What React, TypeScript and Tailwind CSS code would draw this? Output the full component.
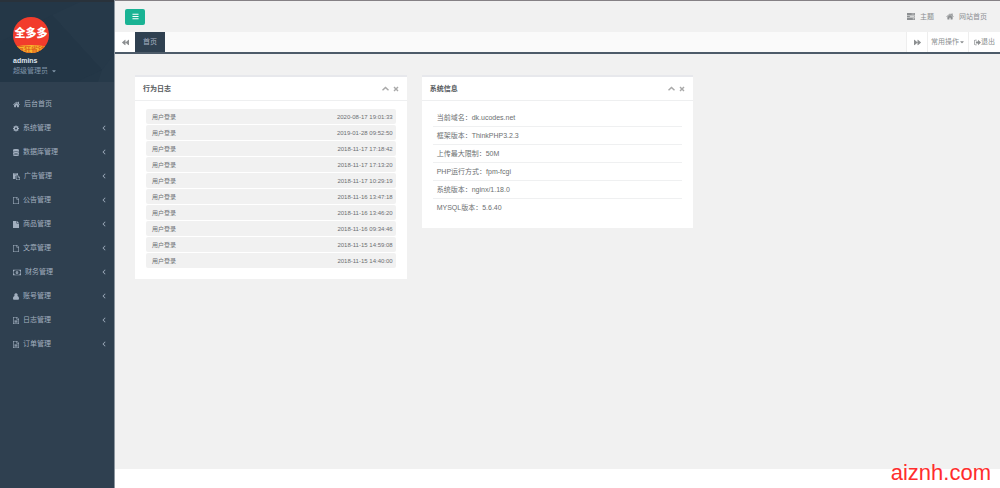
import type { ReactNode } from 'react';
import { FaBackward, FaBars, FaCaretDown, FaForward } from 'react-icons/fa';

type IconProps = { className?: string };

function Glyph({ box, className, children }: IconProps & { box: string; children: ReactNode }) {
  return (
    <svg viewBox={box} className={className} fill="currentColor" fillRule="evenodd" aria-hidden="true">
      {children}
    </svg>
  );
}

function HomeIcon({ className }: IconProps) {
  return (
    <Glyph box="0 128 1664 1536" className={className}>
      <path d="M1408 992v480q0 26-19 45t-45 19h-384v-384h-256v384h-384q-26 0-45-19t-19-45v-480q0-1 .5-3t.5-3l575-474 575 474q1 2 1 6zm223-69l-62 74q-8 9-21 11h-3q-13 0-21-7l-692-577-692 577q-12 8-24 7-13-2-21-11l-62-74q-8-10-7-23.5t11-21.5l719-599q32-26 76-26t76 26l244 204v-195q0-14 9-23t23-9h192q14 0 23 9t9 23v408l219 182q10 8 11 21.5t-7 23.5z" />
    </Glyph>
  );
}

function CogIcon({ className }: IconProps) {
  return (
    <Glyph box="0 0 12 12" className={className}>
      <path d="M5 0h2l.3 1.6 1 .4L9.700 1.100 10.900 2.300 10 3.700l.4 1L12 5v2l-1.600.3-.4 1 .9 1.400-1.200 1.200L8.300 10l-1 .4L7 12H5l-.3-1.600-1-.4-1.400.9L1.100 9.700 2 8.300l-.4-1L0 7V5l1.600-.3.4-1L1.100 2.300 2.300 1.100 3.700 2l1-.4zM6 4a2 2 0 1 0 0 4a2 2 0 0 0 0-4z" />
    </Glyph>
  );
}

function DatabaseIcon({ className }: IconProps) {
  return (
    <Glyph box="0 0 12 14" className={className}>
      <path d="M0 2C0 .7 2.500 0 6 0s6 .7 6 2v1c0 1.300-2.500 2-6 2s-6-.7-6-2zM0 4.500C1.300 5.600 3.500 6 6 6s4.700-.4 6-1.500V6c0 1.300-2.500 2-6 2s-6-.7-6-2zM0 7.500C1.300 8.600 3.500 9 6 9s4.700-.4 6-1.500V9c0 1.300-2.500 2-6 2s-6-.7-6-2zM0 10.500C1.300 11.600 3.500 12 6 12s4.700-.4 6-1.500V12c0 1.300-2.500 2-6 2s-6-.7-6-2z" />
    </Glyph>
  );
}

function PasteIcon({ className }: IconProps) {
  return (
    <Glyph box="0 0 14 14" className={className}>
      <path d="M0 .7h10V4H7L5 6v6H0zM2.500 1.500v1h5v-1zM6 5h4.500L14 8.500V14H6zM7 6v7h6V9.500H9.500V6zM10.500 6.500v2h2z" />
    </Glyph>
  );
}

function FileOutlineIcon({ className }: IconProps) {
  return (
    <Glyph box="0 0 12 14" className={className}>
      <path d="M0 0h8l4 4v10H0zM1.200 1.200v11.600h9.600V5H7V1.200zM8.200 1.500v2.300h2.300z" />
    </Glyph>
  );
}

function FileIcon({ className }: IconProps) {
  return (
    <Glyph box="0 0 12 14" className={className}>
      <path d="M0 0h7v5h5v9H0zM8 0l4 4H8z" />
    </Glyph>
  );
}

function FileTextIcon({ className }: IconProps) {
  return (
    <Glyph box="0 0 12 14" className={className}>
      <path d="M0 0h8l4 4v10H0zM1.200 1.200v11.600h9.600V5H7V1.200zM8.200 1.500v2.300h2.300zM3 6h6v1.200H3zM3 8.200h6v1.200H3zM3 10.400h6v1.200H3z" />
    </Glyph>
  );
}

function MoneyIcon({ className }: IconProps) {
  return (
    <Glyph box="0 0 15 12" className={className}>
      <path d="M0 1h15v10H0zM3 2A2 2 0 0 1 1 4v4a2 2 0 0 1 2 2h9a2 2 0 0 1 2-2V4a2 2 0 0 1-2-2zM7.500 3a2.500 3 0 1 1 0 6a2.500 3 0 1 1 0-6zM7 4.300v3.500h1V4.300z" />
    </Glyph>
  );
}

function UserIcon({ className }: IconProps) {
  return (
    <Glyph box="0 0 12 13" className={className}>
      <path d="M6 0a3.300 3.300 0 0 1 2.600 5.500C11 6 12 8 12 10.500 12 12 11 13 9.500 13h-7C1 13 0 12 0 10.500 0 8 1 6 3.400 5.500A3.300 3.300 0 0 1 6 0z" />
    </Glyph>
  );
}

function TasksIcon({ className }: IconProps) {
  return (
    <Glyph box="0 0 14 12" className={className}>
      <path d="M0 0h14v3.400H0zM8 1v1.200h5V1zM0 4.300h14v3.400H0zM5 5.300v1.200h8V5.300zM0 8.600h14V12H0zM10 9.600v1.200h3V9.600z" />
    </Glyph>
  );
}

function SignOutIcon({ className }: IconProps) {
  return (
    <Glyph box="0 0 13 12" className={className}>
      <path d="M5 1v1.300H2.500Q1.300 2.300 1.300 3.500v5q0 1.200 1.200 1.200H5V11H2.500Q0 11 0 8.500v-5Q0 1 2.500 1zM7.500 1L13 6l-5.500 5V8H3.500V4h4z" />
    </Glyph>
  );
}

function ChevronUpIcon({ className }: IconProps) {
  return (
    <Glyph box="0 0 14 14" className={className}>
      <path d="M7 3l7 6.500-2 2L7 7l-5 4.500-2-2z" />
    </Glyph>
  );
}

function CloseIcon({ className }: IconProps) {
  return (
    <Glyph box="0 0 12 12" className={className}>
      <path d="M3 1l3 3 3-3 2 2-3 3 3 3-2 2-3-3-3 3-2-2 3-3-3-3z" />
    </Glyph>
  );
}

function AngleLeftIcon({ className }: IconProps) {
  return (
    <Glyph box="0 0 8 12" className={className}>
      <path d="M6 1l1 1-3.800 4L7 10l-1 1-5-5z" />
    </Glyph>
  );
}

const menu: { label: string; icon: (props: IconProps) => ReactNode; size: string; leaf?: boolean }[] = [
  { label: '后台首页', icon: HomeIcon, size: 'w-[7px]', leaf: true },
  { label: '系统管理', icon: CogIcon, size: 'w-[6px]' },
  { label: '数据库管理', icon: DatabaseIcon, size: 'w-[6px]' },
  { label: '广告管理', icon: PasteIcon, size: 'w-[7px]' },
  { label: '公告管理', icon: FileOutlineIcon, size: 'w-[6px]' },
  { label: '商品管理', icon: FileIcon, size: 'w-[6px]' },
  { label: '文章管理', icon: FileOutlineIcon, size: 'w-[6px]' },
  { label: '财务管理', icon: MoneyIcon, size: 'w-[8px]' },
  { label: '账号管理', icon: UserIcon, size: 'w-[6px]' },
  { label: '日志管理', icon: FileTextIcon, size: 'w-[6px]' },
  { label: '订单管理', icon: FileTextIcon, size: 'w-[6px]' },
];

const logs = [
  '2020-08-17 19:01:33',
  '2019-01-28 09:52:50',
  '2018-11-17 17:18:42',
  '2018-11-17 17:13:20',
  '2018-11-17 10:29:19',
  '2018-11-16 13:47:18',
  '2018-11-16 13:46:20',
  '2018-11-16 09:34:46',
  '2018-11-15 14:59:08',
  '2018-11-15 14:40:00',
];

const info = [
  ['当前域名', 'dk.ucodes.net'],
  ['框架版本', 'ThinkPHP3.2.3'],
  ['上传最大限制', '50M'],
  ['PHP运行方式', 'fpm-fcgi'],
  ['系统版本', 'nginx/1.18.0'],
  ['MYSQL版本', '5.6.40'],
];

function Logo() {
  return (
    <svg viewBox="0 0 36 36" className="size-9" role="img" aria-label="全多多">
      <defs>
        <clipPath id="disc">
          <circle cx="18" cy="18" r="18" />
        </clipPath>
      </defs>
      <g clipPath="url(#disc)">
        <rect width="36" height="36" fill="#f23c2c" />
        <path d="M0 30Q18 26 36 30V36H0Z" fill="#f9b52c" />
        <text x="18" y="20" textAnchor="middle" fontSize="11" fontWeight="900" fill="#fff">
          全多多
        </text>
        <text x="18" y="35" textAnchor="middle" fontSize="7" fontWeight="700" fill="#e0641c">
          疯狂省钱
        </text>
      </g>
    </svg>
  );
}

function Panel({ title, children }: { title: string; children: ReactNode }) {
  return (
    <section className="border-t-2 border-[#e7e8ec] bg-white">
      <header className="flex h-6 items-center justify-between border-b border-[#eeeff0] px-2">
        <h2 className="text-[7px] font-bold text-[#55595c]">{title}</h2>
        <div className="flex gap-1 text-[#a9a9a9]">
          <button type="button" aria-label="收起">
            <ChevronUpIcon className="size-[7px]" />
          </button>
          <button type="button" aria-label="关闭">
            <CloseIcon className="size-[6px]" />
          </button>
        </div>
      </header>
      <div className="px-[11px] pt-[7px] pb-[11px]">{children}</div>
    </section>
  );
}

export default function App() {
  return (
    <div className="flex min-h-screen bg-[#f1f1f1] font-['Liberation_Sans','Noto_Sans_CJK_SC',sans-serif] text-[7px] leading-[10px] text-[#6c6f71]">
      <aside className="w-[115px] shrink-0 border-r border-[#8c969f] bg-[#2f4050] text-[#a2afbf]">
        <div className="relative h-[82px] overflow-hidden border-t-2 border-[#29323b] bg-[#243747]">
          <svg
            viewBox="0 0 114 80"
            preserveAspectRatio="none"
            className="absolute inset-0 size-full"
            aria-hidden="true"
          >
            <path d="M52 13L80 0H114V70L102 68Z" fill="#263949" />
            <path d="M52 13L102 68L76 80H0V40Z" fill="#233646" />
            <path d="M102 68L114 52V80H98Z" fill="#273a4a" />
          </svg>
          <div className="relative flex flex-col items-start pt-[15px] pl-[13px]">
            <Logo />
            <strong className="mt-[3px] text-[#dfe4ed]">admins</strong>
            <button type="button" className="flex items-center gap-[3px] text-[#8095a8]">
              超级管理员
              <FaCaretDown className="size-[6px]" />
            </button>
          </div>
        </div>
        <nav className="pt-[10px]">
          <ul>
            {menu.map(({ label, icon: Icon, size, leaf }) => (
              <li key={label}>
                <a href="#" className="flex h-6 items-center pr-2 pl-[13px]">
                  <Icon className={`h-[7px] ${size}`} />
                  <span className="ml-[4px] flex-1">{label}</span>
                  {!leaf && <AngleLeftIcon className="h-[6px] w-1" />}
                </a>
              </li>
            ))}
          </ul>
        </nav>
      </aside>

      <div className="flex min-w-0 flex-1 flex-col border-t border-[#858185]">
        <header className="flex h-[31px] items-center justify-between pr-[13px] pl-[10px]">
          <button
            type="button"
            aria-label="菜单"
            className="flex h-4 w-5 items-center justify-center rounded-xs bg-[#1ab394] text-white"
          >
            <FaBars className="size-[7px]" />
          </button>
          <div className="flex items-center gap-3 text-[#8c8f91]">
            <a href="#" className="flex items-center gap-[5px]">
              <TasksIcon className="h-[7px] w-2" />
              主题
            </a>
            <a href="#" className="flex items-center gap-[5px]">
              <HomeIcon className="h-[7px] w-2" />
              网站首页
            </a>
          </div>
        </header>

        <div className="flex h-[22px] border-b-2 border-[#4d5b69] bg-[#fafafa] text-[#8c8f91]">
          <button type="button" aria-label="向左" className="flex w-5 items-center justify-center bg-white">
            <FaBackward className="size-[7px]" />
          </button>
          <a href="#" className="flex w-[30px] items-center justify-center bg-[#2f4050] text-[#a7b1c2]">
            首页
          </a>
          <div className="flex-1" />
          <button
            type="button"
            aria-label="向右"
            className="flex w-[21px] items-center justify-center border-l border-[#eeeeee] bg-white"
          >
            <FaForward className="size-[7px]" />
          </button>
          <button
            type="button"
            className="flex w-[41px] items-center justify-center border-l border-[#eeeeee] bg-white"
          >
            常用操作
            <FaCaretDown className="size-[6px]" />
          </button>
          <a href="#" className="flex w-8 items-center justify-center border-l border-[#eeeeee] bg-white">
            <SignOutIcon className="size-[7px]" />
            退出
          </a>
        </div>

        <main className="grid flex-1 grid-cols-3 content-start gap-[15px] px-5 pt-[21px]">
          <div>
            <Panel title="行为日志">
              <ul className="flex flex-col gap-px pt-px">
                {logs.map((time) => (
                  <li
                    key={time}
                    className="flex h-[15px] items-center justify-between rounded-xs bg-[#f1f1f1] pr-[3px] pl-[6px] text-[6px]"
                  >
                    <span>用户登录</span>
                    <time>{time}</time>
                  </li>
                ))}
              </ul>
            </Panel>
          </div>
          <div>
            <Panel title="系统信息">
              <ul className="pt-px">
                {info.map(([name, value]) => (
                  <li
                    key={name}
                    className="flex h-[18px] items-center border-b border-[#eff0f1] pl-1 last:border-b-0"
                  >
                    {name}：{value}
                  </li>
                ))}
              </ul>
            </Panel>
          </div>
        </main>

        <footer className="flex h-[19px] items-center justify-end bg-white pr-[9px]">
          <span className="pb-[11px] text-[22px] leading-none text-[#ff2d2d]">aiznh.com</span>
        </footer>
      </div>
    </div>
  );
}
